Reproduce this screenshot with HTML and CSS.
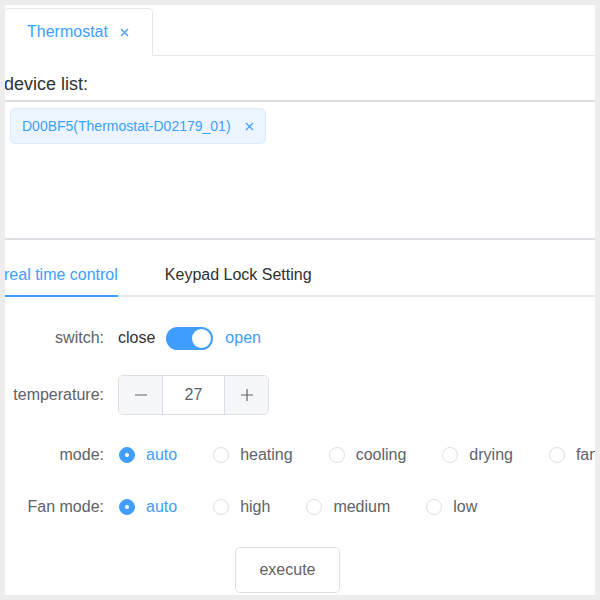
FILE: index.html
```html
<!DOCTYPE html>
<html lang="en">
<head>
    <meta charset="UTF-8">
    <meta name="viewport" content="width=device-width, initial-scale=1.0">
    <title>Thermostat</title>
    <link rel="stylesheet" href="styles.css">
</head>
<body>

    <div class="panel">
        <div class="card-tabs">
            <div class="card-tab active">
                Thermostat
                <svg class="close-icon" width="9" height="9" viewBox="0 0 9 9"><path d="M1 1L8 8M8 1L1 8" stroke="#409eff" stroke-width="1.3" fill="none"/></svg>
            </div>
        </div>

        <div class="device-label">device list:</div>
        <div class="device-box">
            <span class="tag">
                D00BF5(Thermostat-D02179_01)
                <svg class="close-icon" width="9" height="9" viewBox="0 0 9 9"><path d="M1 1L8 8M8 1L1 8" stroke="#409eff" stroke-width="1.3" fill="none"/></svg>
            </span>
        </div>

        <div class="tabs-nav">
            <div class="tab-item active">real time control</div>
            <div class="tab-item">Keypad Lock Setting</div>
        </div>

        <div class="control-form">
            <div class="form-row row-switch">
                <label class="form-label">switch:</label>
                <div class="form-content">
                    <span class="switch-text">close</span>
                    <span class="switch on"></span>
                    <span class="switch-text active">open</span>
                </div>
            </div>

            <div class="form-row row-temp">
                <label class="form-label">temperature:</label>
                <div class="form-content">
                    <div class="input-number">
                        <span class="num-btn minus">
                            <svg width="14" height="14" viewBox="0 0 14 14"><path d="M1 7H13" stroke="#606266" stroke-width="1.2"/></svg>
                        </span>
                        <span class="num-value">27</span>
                        <span class="num-btn plus">
                            <svg width="14" height="14" viewBox="0 0 14 14"><path d="M1 7H13M7 1V13" stroke="#606266" stroke-width="1.2"/></svg>
                        </span>
                    </div>
                </div>
            </div>

            <div class="form-row row-mode">
                <label class="form-label">mode:</label>
                <div class="form-content">
                    <span class="radio checked"><span class="radio-dot"></span>auto</span>
                    <span class="radio"><span class="radio-dot"></span>heating</span>
                    <span class="radio"><span class="radio-dot"></span>cooling</span>
                    <span class="radio"><span class="radio-dot"></span>drying</span>
                    <span class="radio"><span class="radio-dot"></span>fan</span>
                </div>
            </div>

            <div class="form-row row-fan">
                <label class="form-label">Fan mode:</label>
                <div class="form-content">
                    <span class="radio checked"><span class="radio-dot"></span>auto</span>
                    <span class="radio"><span class="radio-dot"></span>high</span>
                    <span class="radio"><span class="radio-dot"></span>medium</span>
                    <span class="radio"><span class="radio-dot"></span>low</span>
                </div>
            </div>

            <div class="form-actions">
                <button class="execute-button">execute</button>
            </div>
        </div>
    </div>

</body>
</html>
```

FILE: styles.css
```css
body {
    margin: 0;
    padding: 5px;
    background: #ededed;
    font-family: "Liberation Sans", Arial, sans-serif;
}

.panel {
    width: 590px;
    height: 590px;
    background: white;
    overflow: hidden;
}

/* top card tabs */
.card-tabs {
    display: flex;
    padding-top: 3px;
    border-bottom: 1px solid #e4e7ed;
}

.card-tab {
    display: flex;
    align-items: center;
    height: 46px;
    margin-left: -1px;
    margin-bottom: -1px;
    padding: 0 23px 0 22px;
    border: 1px solid #e4e7ed;
    border-bottom: 1px solid white;
    border-radius: 5px 5px 0 0;
    font-size: 16px;
    color: #409eff;
    background: white;
}

.card-tab .close-icon {
    margin-left: 12px;
}

/* device list */
.device-label {
    margin-left: -1px;
    padding: 18px 0 6px;
    line-height: 20px;
    font-size: 18px;
    color: #303133;
}

.device-box {
    height: 130px;
    padding: 6px 0 0 5px;
    border-top: 2px solid #dcdfe6;
    border-bottom: 2px solid #dcdfe6;
}

.tag {
    display: inline-flex;
    align-items: center;
    height: 34px;
    padding: 0 11px;
    border: 1px solid #d9ecff;
    border-radius: 5px;
    background: #ecf5ff;
    color: #409eff;
    font-size: 14px;
}

.tag .close-icon {
    margin-left: 14px;
}

/* inner tabs */
.tabs-nav {
    display: flex;
    gap: 47px;
    padding-top: 15px;
    margin-left: -1px;
    border-bottom: 2px solid #e4e7ed;
}

.tab-item {
    height: 40px;
    line-height: 40px;
    font-size: 16px;
    color: #303133;
    margin-bottom: -2px;
    border-bottom: 2px solid transparent;
}

.tab-item.active {
    color: #409eff;
    border-bottom-color: #409eff;
}

/* form */
.control-form {
    padding-top: 18px;
}

.form-row {
    display: flex;
    align-items: center;
    height: 46px;
    font-size: 16px;
}

.row-temp { margin-top: 11px; }
.row-mode { margin-top: 14px; }
.row-fan { margin-top: 6px; }

.form-label {
    flex: none;
    width: 99px;
    padding-right: 14px;
    text-align: right;
    color: #606266;
}

.form-content {
    flex: none;
    display: flex;
    align-items: center;
    white-space: nowrap;
}

.switch-text {
    color: #303133;
}

.switch-text.active {
    color: #409eff;
}

.switch {
    position: relative;
    width: 47px;
    height: 23px;
    margin: 0 12px 0 11px;
    border-radius: 12px;
    background: #dcdfe6;
}

.switch.on {
    background: #409eff;
}

.switch::after {
    content: "";
    position: absolute;
    top: 2px;
    left: 2px;
    width: 19px;
    height: 19px;
    border-radius: 50%;
    background: white;
}

.switch.on::after {
    left: 26px;
}

.input-number {
    display: flex;
    width: 149px;
    height: 38px;
    border: 1px solid #dcdfe6;
    border-radius: 5px;
    overflow: hidden;
}

.num-btn {
    display: flex;
    align-items: center;
    justify-content: center;
    width: 43px;
    background: #f5f7fa;
}

.num-btn.minus {
    border-right: 1px solid #dcdfe6;
}

.num-btn.plus {
    border-left: 1px solid #dcdfe6;
}

.num-value {
    flex: 1;
    text-align: center;
    line-height: 38px;
    color: #606266;
}

.radio {
    flex: none;
    display: inline-flex;
    align-items: center;
    margin-right: 35px;
    color: #606266;
}

.radio-dot {
    position: relative;
    flex: none;
    width: 14px;
    height: 14px;
    margin: 0 11px 0 1px;
    border: 1px solid #dcdfe6;
    border-radius: 50%;
    background: white;
}

.radio.checked {
    color: #409eff;
}

.radio.checked .radio-dot {
    border-color: #409eff;
    background: #409eff;
}

.radio.checked .radio-dot::after {
    content: "";
    position: absolute;
    top: 5px;
    left: 5px;
    width: 4px;
    height: 4px;
    border-radius: 50%;
    background: white;
}

.form-actions {
    margin-top: 17px;
    padding-left: 230px;
}

.execute-button {
    width: 105px;
    height: 46px;
    border: 1px solid #dcdfe6;
    border-radius: 5px;
    background: white;
    color: #606266;
    font-family: "Liberation Sans", Arial, sans-serif;
    font-size: 16px;
}
```
